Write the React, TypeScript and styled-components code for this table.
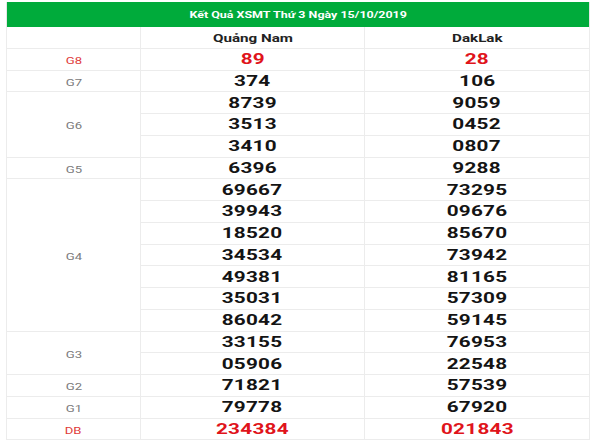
import React from "react";
import styled, { createGlobalStyle } from "styled-components";

const GlobalStyle = createGlobalStyle`
  body {
    margin: 0;
    background: #ffffff;
    font-family: Roboto, "Liberation Sans", sans-serif;
  }
`;

const Page = styled.div`
  padding: 2px 11px 0 6px;
`;

const Table = styled.table`
  width: 583px;
  border-collapse: collapse;
  table-layout: fixed;
  border-left: 1px solid #e6e6e6;
  border-right: 1px solid #e6e6e6;
`;

const TitleCell = styled.th`
  background: #00ab3b;
  color: #ffffff;
  height: 25px;
  padding: 0;
  font-size: 9.3px;
  font-weight: 700;
  text-align: center;
`;

const Cell = styled.td<{ $head?: boolean }>`
  height: 20.75px;
  padding: 0;
  text-align: center;
  border: 1px solid #ececec;
  border-top-width: ${(p) => (p.$head ? 0 : 1)}px;
  vertical-align: middle;
  line-height: 1;
`;

// picture is stretched sideways, so every text gets widened
const Wide = styled.span<{ $scale?: number }>`
  display: inline-block;
  transform: scaleX(${(p) => p.$scale ?? 1.38});
  white-space: nowrap;
`;

const ProvinceName = styled.span`
  font-size: 11px;
  font-weight: 700;
  color: #222222;
`;

const Label = styled.span<{ $red?: boolean }>`
  font-size: 9.5px;
  color: ${(p) => (p.$red ? "#e03a3a" : "#7a7a7a")};
`;

const Num = styled.span<{ $red?: boolean }>`
  font-size: 15px;
  font-weight: 700;
  color: ${(p) => (p.$red ? "#e0141b" : "#141414")};
  letter-spacing: 0.2px;
`;

type Prize = { name: string; red?: boolean; a: string[]; b: string[] };

const prizes: Prize[] = [
  { name: "G8", red: true, a: ["89"], b: ["28"] },
  { name: "G7", a: ["374"], b: ["106"] },
  { name: "G6", a: ["8739", "3513", "3410"], b: ["9059", "0452", "0807"] },
  { name: "G5", a: ["6396"], b: ["9288"] },
  {
    name: "G4",
    a: ["69667", "39943", "18520", "34534", "49381", "35031", "86042"],
    b: ["73295", "09676", "85670", "73942", "81165", "57309", "59145"],
  },
  { name: "G3", a: ["33155", "05906"], b: ["76953", "22548"] },
  { name: "G2", a: ["71821"], b: ["57539"] },
  { name: "G1", a: ["79778"], b: ["67920"] },
  { name: "DB", red: true, a: ["234384"], b: ["021843"] },
];

const App = () => {
  return (
    <>
      <GlobalStyle />
      <Page>
        <Table>
          <colgroup>
            <col style={{ width: 134 }} />
            <col style={{ width: 224 }} />
            <col style={{ width: 225 }} />
          </colgroup>
          <thead>
            <tr>
              <TitleCell colSpan={3}>
                <Wide $scale={1.34}>Kết Quả XSMT Thứ 3 Ngày 15/10/2019</Wide>
              </TitleCell>
            </tr>
          </thead>
          <tbody>
            <tr>
              <Cell $head></Cell>
              <Cell $head>
                <Wide>
                  <ProvinceName>Quảng Nam</ProvinceName>
                </Wide>
              </Cell>
              <Cell $head>
                <Wide>
                  <ProvinceName>DakLak</ProvinceName>
                </Wide>
              </Cell>
            </tr>
            {prizes.map((p) =>
              p.a.map((num, i) => (
                <tr key={p.name + i}>
                  {i === 0 && (
                    <Cell rowSpan={p.a.length}>
                      <Wide>
                        <Label $red={p.red}>{p.name}</Label>
                      </Wide>
                    </Cell>
                  )}
                  <Cell>
                    <Wide>
                      <Num $red={p.red}>{num}</Num>
                    </Wide>
                  </Cell>
                  <Cell>
                    <Wide>
                      <Num $red={p.red}>{p.b[i]}</Num>
                    </Wide>
                  </Cell>
                </tr>
              ))
            )}
          </tbody>
        </Table>
      </Page>
    </>
  );
};

export default App;
